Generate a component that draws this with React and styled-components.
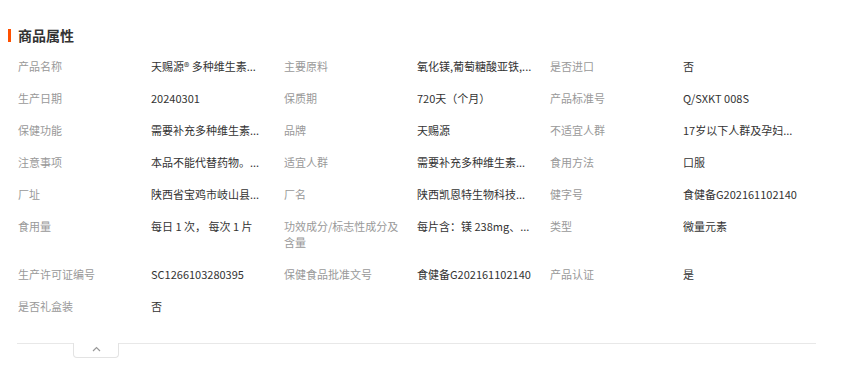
import styled, { createGlobalStyle } from 'styled-components';

const attrs = [
	['产品名称', '天赐源® 多种维生素...'],
	['主要原料', '氧化镁,葡萄糖酸亚铁,...'],
	['是否进口', '否'],
	['生产日期', '20240301'],
	['保质期', '720天（个月）'],
	['产品标准号', 'Q/SXKT 008S'],
	['保健功能', '需要补充多种维生素...'],
	['品牌', '天赐源'],
	['不适宜人群', '17岁以下人群及孕妇...'],
	['注意事项', '本品不能代替药物。...'],
	['适宜人群', '需要补充多种维生素...'],
	['食用方法', '口服'],
	['厂址', '陕西省宝鸡市岐山县...'],
	['厂名', '陕西凯恩特生物科技...'],
	['健字号', '食健备G202161102140'],
	['食用量', '每日 1 次， 每次 1 片'],
	['功效成分/标志性成分及含量', '每片含：镁 238mg、...'],
	['类型', '微量元素'],
	['生产许可证编号', 'SC1266103280395'],
	['保健食品批准文号', '食健备G202161102140'],
	['产品认证', '是'],
	['是否礼盒装', '否'],
];

function App() {
	return (
		<>
			<GlobalStyle />
			<Section>
				<Title>商品属性</Title>
				<Grid>
					{attrs.map(([label, value]) => (
						<Item key={label}>
							<Label>{label}</Label>
							<Value>{value}</Value>
						</Item>
					))}
				</Grid>
				<Footer>
					<Toggle>
						<svg width='9' height='6' viewBox='0 0 9 6'>
							<polyline points='1,5 4.5,1.5 8,5' fill='none' stroke='#999' strokeWidth='1.2' />
						</svg>
					</Toggle>
				</Footer>
			</Section>
		</>
	);
}

export default App;

const GlobalStyle = createGlobalStyle`
	body {
		margin: 0;
		background: #fff;
		font-family: "Noto Sans CJK SC", "Liberation Sans", sans-serif;
	}
`;

const Section = styled.div`
	padding: 29px 0 0 8px;
	width: 808px;
`;

const Title = styled.h3`
	margin: 0;
	padding-left: 7px;
	border-left: 3px solid #ff5000;
	font-size: 14px;
	font-weight: bold;
	line-height: 13px;
	height: 13px;
	color: #333;
	display: flex;
	align-items: center;
`;

const Grid = styled.div`
	display: grid;
	grid-template-columns: repeat(3, 266px);
	margin: 8px 0 0 10px;
`;

const Item = styled.div`
	display: grid;
	grid-template-columns: 133px 133px;
	align-items: start;
	padding: 8px 0;
	font-size: 11px;
	line-height: 16px;
`;

const Label = styled.div`
	color: #999;
	padding-right: 14px;
`;

const Value = styled.div`
	color: #333;
	padding-right: 12px;
	white-space: nowrap;
	overflow: hidden;
	text-overflow: ellipsis;
`;

const Footer = styled.div`
	margin: 21px 0 0 9px;
	width: 799px;
	border-top: 1px solid #e8e8e8;
`;

const Toggle = styled.div`
	margin: -1px 0 0 56px;
	width: 46px;
	height: 15px;
	background: #fff;
	border: 1px solid #e3e3e3;
	border-top: none;
	border-radius: 0 0 4px 4px;
	display: flex;
	justify-content: center;
	align-items: flex-start;
	padding-top: 3px;
	box-sizing: border-box;
`;
